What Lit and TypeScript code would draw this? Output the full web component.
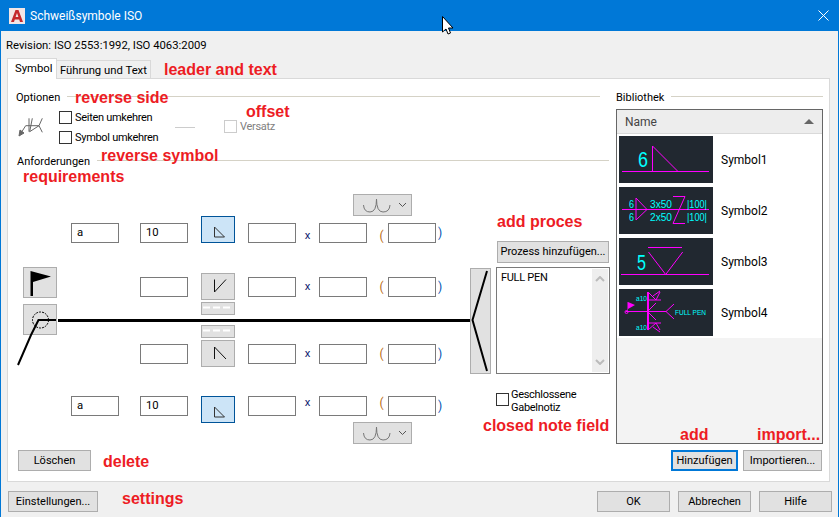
import {LitElement, html, css, svg} from 'lit';
import {customElement} from 'lit/decorators.js';
import {styleMap} from 'lit/directives/style-map.js';

// red notes somebody wrote over the dialog: [text, x, y]
const NOTES: [string, number, number][] = [
  ['leader and text', 164, 61],
  ['reverse side', 75, 89],
  ['offset', 246, 103],
  ['reverse symbol', 101, 147],
  ['requirements', 23, 168],
  ['add proces', 497, 213],
  ['closed note field', 483, 417],
  ['delete', 103, 453],
  ['settings', 122, 490],
  ['add', 680, 426],
  ['import...', 757, 426],
];

const cyan = '#00ffff';
const pink = '#ff00ff';

const label = (x: number, y: number, size: number, width: number, text: string) =>
  svg`<text x=${x} y=${y} font-size=${size} fill=${cyan} textLength=${width} lengthAdjust="spacingAndGlyphs">${text}</text>`;

const THUMBS = [
  svg`<path d="M3 35.5H90M33.5 10V35.500M33.5 10L59 35.5" stroke=${pink} fill="none"/>
    ${label(19, 31, 22, 10, '6')}`,
  svg`<path d="M3 22.5H90M17 11V33M17 11L28 22.500L17 33M54 9.500H66L54 36.500H66" stroke=${pink} fill="none"/>
    ${label(10, 21, 10, 5, '6')}
    ${label(10, 34, 10, 5, '6')}
    ${label(31, 21, 10, 22, '3x50')}
    ${label(31, 34, 10, 22, '2x50')}
    ${label(68, 21, 10, 20, '|100|')}
    ${label(68, 34, 10, 20, '|100|')}`,
  svg`<path d="M2 36.5H90M29 9.5H63M29.5 14L46.7 36.5L63.7 14" stroke=${pink} fill="none"/>
    ${label(18, 32, 22, 9, '5')}`,
  svg`<path d="M7 22.500H47M55 15L47 22.500L55 30" stroke=${pink} fill="none"/>
    <path d="M29 3V41" stroke=${pink} stroke-width="2" fill="none"/>
    <path d="M29 22L37 14M29 23L37 31M29 3L37 11H29M29 41L37 34H29M37 11L41 3M37 34L41 41M34 7L41 2M34 38L41 43M37 11H42M37 34H42" stroke=${pink} fill="none"/>
    <path d="M9 13L16 16L9 20V22.500H8.500V13Z" fill=${pink}/>
    <circle cx="7.500" cy="23" r="1.500" stroke=${pink} fill="none"/>
    ${label(17, 12, 7.5, 11, 'a10')}
    ${label(17, 41, 7.5, 11, 'a10')}
    ${label(56, 26, 7.5, 31, 'FULL PEN')}`,
];

@customElement('app-root')
export class AppRoot extends LitElement {
  static styles = css`
    :host {
      display: block;
      position: relative;
      width: 839px;
      height: 517px;
      overflow: hidden;
      box-sizing: border-box;
      background: #f0f0f0;
      border-left: 1px solid #0078d7;
      border-right: 1px solid #0078d7;
      font: 11.3px/14px Roboto, sans-serif;
      color: #000;
    }
    svg { display: block; }

    .title {
      display: flex;
      align-items: center;
      height: 31px;
      margin: 0 -1px;
      padding: 0 10px 0 9px;
      background: #0078d7;
      color: #fff;
      font-size: 12px;
    }
    .logo {
      display: flex;
      align-items: center;
      justify-content: center;
      width: 16px;
      height: 16px;
      margin-right: 5px;
      background: #f2e6e6;
    }
    .close { margin-left: auto; }

    .revision {
      height: 27px;
      padding: 8px 5px 0;
      box-sizing: border-box;
    }

    .tabs {
      display: flex;
      align-items: flex-end;
      height: 20px;
      padding-left: 6px;
    }
    .tab {
      box-sizing: border-box;
      height: 18px;
      width: 94px;
      padding: 3px 0 0 3px;
      border: 1px solid #d9d9d9;
      border-bottom: 0;
      border-left: 0;
      white-space: nowrap;
    }
    .tab.active {
      position: relative;
      z-index: 1;
      width: 50px;
      height: 21px;
      margin-bottom: -1px;
      padding: 3px 0 0 7px;
      border-left: 1px solid #d9d9d9;
      background: #fff;
    }

    .panel {
      display: flex;
      gap: 6px;
      box-sizing: border-box;
      height: 404px;
      margin: 0 8px 0 6px;
      padding: 11px 0 0 8px;
      background: #fff;
      border: 1px solid #d9d9d9;
    }
    .left { width: 594px; }
    .right { width: 207px; }

    .group {
      display: flex;
      align-items: center;
      height: 14px;
      gap: 7px;
      font-size: 11px;
    }
    .group span { padding-top: 2px; }
    .group i {
      flex: 1;
      height: 1px;
      margin-top: -1px;
      background: #d5d2c6;
    }
    .group.opt { margin-right: 10px; }
    .group.req { margin: 0 1px; }

    .options {
      display: flex;
      height: 50px;
    }
    .weld-icon { margin: 9px 12px 0 0; }
    .checks {
      display: flex;
      flex-direction: column;
      gap: 7px;
      width: 116px;
      padding-top: 7px;
    }
    .check {
      display: flex;
      align-items: center;
      gap: 3px;
      height: 13px;
      font-size: 11px;
      letter-spacing: -.3px;
    }
    .box {
      flex: none;
      box-sizing: border-box;
      width: 13px;
      height: 13px;
      border: 1px solid #333;
      background: #fff;
    }
    .dash {
      width: 20px;
      height: 1px;
      margin: 23px 29px 0 0;
      background: #ccc;
    }
    .check.off {
      margin-top: 16px;
      color: #808080;
    }
    .check.off .box { border-color: #ccc; }

    .weld {
      display: flex;
      margin: 26px 0 0 7px;
    }
    .side {
      display: flex;
      flex-direction: column;
      gap: 6px;
      margin: 73px 14px 0 0;
    }
    .btn {
      box-sizing: border-box;
      display: flex;
      align-items: center;
      justify-content: center;
      background: #e1e1e1;
      border: 1px solid #adadad;
      font-size: 11px;
      white-space: nowrap;
    }
    .side .btn { width: 34px; height: 31px; }
    .side svg { overflow: visible; }

    .table {
      display: flex;
      flex-direction: column;
      width: 399px;
    }
    .row, .dashes {
      display: grid;
      grid-template-columns: 48px 21px 48px 13px 34px 13px 48px 23px 48px 21px 48px;
      align-items: center;
    }
    .row { height: 27px; }
    .row.top { align-items: end; margin-bottom: 30px; }
    .row.upper { margin-bottom: 2px; }
    .row.lower { margin: 2px 0 29px; }
    .row.bottom { align-items: start; }
    .field {
      box-sizing: border-box;
      height: 20px;
      padding-left: 5px;
      line-height: 18px;
      background: #fff;
      border: 1px solid #7a7a7a;
    }
    .no-a { grid-column: 3; }
    .sym {
      grid-column: 5;
      height: 27px;
      align-self: start;
    }
    .sym.on {
      background: #cce4f7;
      border-color: #005499;
    }
    .w1 { grid-column: 7; }
    .times {
      text-align: center;
      color: #101a70;
    }
    .open {
      box-sizing: border-box;
      padding-left: 8px;
      text-align: center;
      font-size: 12px;
      color: #b86a10;
    }
    .w3 { grid-column: 11; position: relative; }
    .close-p {
      position: absolute;
      left: 100%;
      top: 0;
      margin-left: 3px;
      font-size: 12px;
      color: #0050b0;
    }
    .dashes .btn {
      grid-column: 5;
      height: 13px;
    }
    .line {
      height: 3px;
      margin: 4px -1px 3px -13px;
      background: #000;
    }
    .combo {
      height: 22px;
      width: 59px;
      margin-left: 282px;
      justify-content: flex-start;
    }
    .combo.end { margin-top: -1px; }

    .fork {
      width: 21px;
      height: 106px;
      margin-top: 74px;
    }
    .process {
      width: 114px;
      margin: 47px 0 0 5px;
    }
    .process > .btn {
      height: 22px;
      margin: 0 1px 4px;
    }
    .notes {
      display: flex;
      justify-content: space-between;
      box-sizing: border-box;
      height: 107px;
      padding: 3px 1px 1px 4px;
      background: #fff;
      border: 1px solid #7a7a7a;
      font-size: 11px;
      letter-spacing: -.3px;
    }
    .scroll {
      display: flex;
      flex-direction: column;
      justify-content: space-between;
      width: 16px;
      padding: 7px 0;
      margin: -2px 0 0;
      background: #eee;
    }
    .closed {
      display: flex;
      gap: 2px;
      margin-top: 19px;
      line-height: 13px;
      font-size: 11px;
      letter-spacing: -.3px;
    }
    .closed .wrap { margin-top: -5px; }

    .clear {
      width: 73px;
      height: 21px;
      margin: 6px 0 0 2px;
    }

    .library {
      box-sizing: border-box;
      height: 335px;
      margin-top: 5px;
      background: #f3f3f3;
      border: 1px solid #666;
    }
    .head {
      display: flex;
      align-items: center;
      justify-content: space-between;
      height: 24px;
      padding: 0 8px;
      background: #ededed;
      border-bottom: 1px solid #d9d9d9;
      box-sizing: border-box;
      color: #444;
      font-size: 12px;
    }
    .items {
      display: flex;
      flex-direction: column;
      gap: 4px;
      padding: 2px 0 2px 2px;
      background: #fff;
    }
    .item {
      display: flex;
      align-items: center;
      gap: 8px;
      font-size: 12px;
    }
    .thumb {
      background: #212830;
      font-family: 'Liberation Sans', sans-serif;
      font-weight: 300;
    }

    .lib-btns {
      display: flex;
      justify-content: flex-end;
      gap: 5px;
      margin-top: 6px;
      padding-right: 1px;
    }
    .lib-btns .btn { height: 21px; }
    .add {
      width: 67px;
      border: 2px solid #0078d7;
    }
    .import { width: 79px; }

    .footer {
      display: flex;
      gap: 8px;
      padding: 9px 6px 0 7px;
    }
    .footer .btn { width: 73px; height: 21px; }
    .footer .settings { width: 90px; margin-right: auto; }

    .note {
      position: absolute;
      font: bold 16px/18px 'Liberation Sans', sans-serif;
      color: #ed1c24;
      white-space: nowrap;
    }
    .cursor {
      position: absolute;
      left: 441px;
      top: 16px;
    }
  `;

  symbolRow(kind: string, icon: unknown, on: boolean, a?: string, s?: string) {
    return html`
      <div class="row ${kind}">
        ${a ? html`<div class="field">${a}</div>` : ''}
        <div class="field no-a">${s}</div>
        <div class="btn sym ${on ? 'on' : ''}">
          <svg width="32" height="25" fill="none" stroke=${on ? '#333' : '#111'}>${icon}</svg>
        </div>
        <div class="field w1"></div>
        <div class="times">x</div>
        <div class="field"></div>
        <div class="open">(</div>
        <div class="field w3"><span class="close-p">)</span></div>
      </div>
    `;
  }

  dashButton() {
    return html`
      <div class="dashes">
        <div class="btn">
          <svg width="32" height="11"><path d="M1 4.500H28" stroke="#fff" stroke-width="2" stroke-dasharray="7 3"/></svg>
        </div>
      </div>
    `;
  }

  combo(extra = '') {
    return html`
      <div class="btn combo ${extra}">
        <svg width="57" height="20" fill="none">
          <path d="M9.500 10Q10 17 16 17Q22.500 17 22.500 4Q22.500 17 29 17Q35.500 17 36 10" stroke="#777"/>
          <path d="M45 8L48.500 11.500L52 8" stroke="#555"/>
        </svg>
      </div>
    `;
  }

  render() {
    const triangle = svg`<path d="M12.500 10V20H22.500Z"/>`;
    return html`
      <div class="title">
        <div class="logo">
          <svg width="14" height="14"><path d="M1 13L5.500 1H8.500L13 13H10L9.200 10.500H4.800L4 13ZM5.600 8H8.400L7 4Z" fill="#c4282c" fill-rule="evenodd"/></svg>
        </div>
        Schweißsymbole ISO
        <svg class="close" width="11" height="11"><path d="M.5 .5L10.500 10.500M10.500 .5L.5 10.500" stroke="#fff"/></svg>
      </div>
      <div class="revision">Revision: ISO 2553:1992, ISO 4063:2009</div>
      <div class="tabs">
        <div class="tab active">Symbol</div>
        <div class="tab">Führung und Text</div>
      </div>

      <div class="panel">
        <div class="left">
          <div class="group opt"><span>Optionen</span><i></i></div>
          <div class="options">
            <svg class="weld-icon" width="31" height="24" fill="none" stroke="#666">
              <path d="M5 20L9.700 12.700H23M13 5.300V18.700M16.300 5.300L13.700 18.700L23 12.700M26.300 5.300L23 12.700L26.300 19.300"/>
              <path d="M3 23L4 17L8 20Z" fill="#666"/>
            </svg>
            <div class="checks">
              <div class="check"><span class="box"></span>Seiten umkehren</div>
              <div class="check"><span class="box"></span>Symbol umkehren</div>
            </div>
            <div class="dash"></div>
            <div class="check off"><span class="box"></span>Versatz</div>
          </div>

          <div class="group req"><span>Anforderungen</span><i></i></div>

          <div class="weld">
            <div class="side">
              <div class="btn">
                <svg width="32" height="29">
                  <path d="M6.500 3L27 8.500L9 14V28H6.500Z"/>
                </svg>
              </div>
              <div class="btn">
                <svg width="32" height="29" fill="none">
                  <circle cx="16.500" cy="15" r="8" stroke="#000" stroke-dasharray="2 1"/>
                  <path d="M32 15H14.500L7 30L-6 60" stroke="#000" stroke-width="2"/>
                </svg>
              </div>
            </div>

            <div class="table">
              ${this.combo()}
              ${this.symbolRow('top', triangle, true, 'a', '10')}
              ${this.symbolRow('upper', svg`<path d="M12.500 5.500V18L24 5.500"/>`, false)}
              ${this.dashButton()}
              <div class="line"></div>
              ${this.dashButton()}
              ${this.symbolRow('lower', svg`<path d="M12.500 18V6L24 18"/>`, false)}
              ${this.symbolRow('bottom', triangle, true, 'a', '10')}
              ${this.combo('end')}
            </div>

            <div class="btn fork">
              <svg width="19" height="104" fill="none">
                <path d="M16 2L1.500 51L16 102" stroke="#000" stroke-width="2"/>
              </svg>
            </div>

            <div class="process">
              <div class="btn">Prozess hinzufügen...</div>
              <div class="notes">
                <span>FULL PEN</span>
                <div class="scroll">
                  <svg width="16" height="6"><path d="M4 5L8 1L12 5" fill="none" stroke="#bbb" stroke-width="2"/></svg>
                  <svg width="16" height="6"><path d="M4 1L8 5L12 1" fill="none" stroke="#bbb" stroke-width="2"/></svg>
                </div>
              </div>
              <div class="closed">
                <span class="box"></span>
                <span class="wrap">Geschlossene<br />Gabelnotiz</span>
              </div>
            </div>
          </div>

          <div class="btn clear">Löschen</div>
        </div>

        <div class="right">
          <div class="group"><span>Bibliothek</span><i></i></div>
          <div class="library">
            <div class="head">
              Name
              <svg width="10" height="5"><path d="M0 5L5 0L10 5Z" fill="#666"/></svg>
            </div>
            <div class="items">
              ${THUMBS.map(
                (t, i) => html`
                  <div class="item">
                    <svg class="thumb" width="94" height="47">${t}</svg>
                    Symbol${i + 1}
                  </div>
                `
              )}
            </div>
          </div>
          <div class="lib-btns">
            <div class="btn add">Hinzufügen</div>
            <div class="btn import">Importieren...</div>
          </div>
        </div>
      </div>

      <div class="footer">
        <div class="btn settings">Einstellungen...</div>
        <div class="btn">OK</div>
        <div class="btn">Abbrechen</div>
        <div class="btn">Hilfe</div>
      </div>

      ${NOTES.map(
        ([text, x, y]) => html`<div class="note" style=${styleMap({left: `${x - 1}px`, top: `${y}px`})}>${text}</div>`
      )}

      <svg class="cursor" width="13" height="20">
        <path d="M.5 .5V16L4 13L6 18L8.500 17L6.500 12H11Z" fill="#fff" stroke="#000"/>
      </svg>
    `;
  }
}
